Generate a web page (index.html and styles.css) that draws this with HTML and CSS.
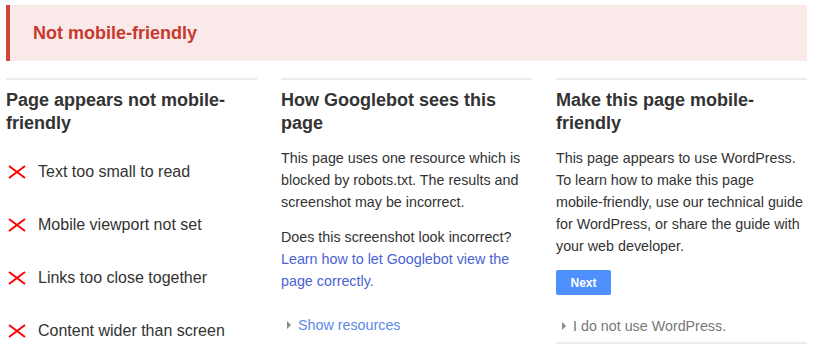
FILE: index.html
```html
<!DOCTYPE html>
<html lang="en">
<head>
    <meta charset="utf-8" />
    <title>Mobile-Friendly Test</title>
    <link rel="stylesheet" href="styles.css">
</head>
<body>
    <div class="page">
        <div class="banner">Not mobile-friendly</div>

        <div class="columns">
            <div class="column">
                <h2>Page appears not mobile-friendly</h2>
                <ul class="issues">
                    <li><svg class="cross" width="18" height="14" viewBox="0 0 18 14"><path d="M1 1L17 13M17 1L1 13" stroke="#f00" stroke-width="2" fill="none"/></svg>Text too small to read</li>
                    <li><svg class="cross" width="18" height="14" viewBox="0 0 18 14"><path d="M1 1L17 13M17 1L1 13" stroke="#f00" stroke-width="2" fill="none"/></svg>Mobile viewport not set</li>
                    <li><svg class="cross" width="18" height="14" viewBox="0 0 18 14"><path d="M1 1L17 13M17 1L1 13" stroke="#f00" stroke-width="2" fill="none"/></svg>Links too close together</li>
                    <li><svg class="cross" width="18" height="14" viewBox="0 0 18 14"><path d="M1 1L17 13M17 1L1 13" stroke="#f00" stroke-width="2" fill="none"/></svg>Content wider than screen</li>
                </ul>
            </div>

            <div class="column">
                <h2>How Googlebot sees this page</h2>
                <p>This page uses one resource which is blocked by robots.txt. The results and screenshot may be incorrect.</p>
                <p>Does this screenshot look incorrect? <a href="#" class="link">Learn how to let Googlebot view the page correctly.</a></p>
                <div class="toggle toggle-blue"><span class="arrow"></span>Show resources</div>
            </div>

            <div class="column column-last">
                <h2>Make this page mobile-friendly</h2>
                <p>This page appears to use WordPress. To learn how to make this page mobile&#8209;friendly, use our technical guide for WordPress, or share the guide with your web developer.</p>
                <button class="next-button">Next</button>
                <div class="toggle toggle-grey"><span class="arrow"></span>I do not use WordPress.</div>
            </div>
        </div>
    </div>
</body>
</html>
```

FILE: styles.css
```css
body {
    margin: 0;
    font-family: "Liberation Sans", Arial, sans-serif;
    color: #333;
    background: #fff;
}

.page {
    padding: 5px 7px 0 6px;
}

.banner {
    background-color: #f9eae9;
    border-left: 4px solid #d2453b;
    color: #c9392f;
    font-size: 18px;
    font-weight: bold;
    height: 56px;
    line-height: 56px;
    padding-left: 23px;
}

.columns {
    display: grid;
    grid-template-columns: 1fr 1fr 1fr;
    column-gap: 24px;
    margin-top: 17px;
}

.column {
    border-top: 2px solid #ebebeb;
}

.column-last {
    border-bottom: 2px solid #ebebeb;
    align-self: start;
    padding-bottom: 5px;
}

h2 {
    font-size: 18px;
    line-height: 23px;
    margin: 9px 0 0 0;
    color: #333;
}

p {
    font-size: 14.3px;
    line-height: 22px;
    margin: 12px 0 0 0;
}

p + p {
    margin-top: 13px;
}

.link {
    color: #4a63d2;
    text-decoration: none;
}

.issues {
    list-style: none;
    padding: 0;
    margin: 26px 0 0 0;
}

.issues li {
    display: flex;
    align-items: center;
    font-size: 16px;
    line-height: 22px;
    margin-bottom: 31px;
}

.cross {
    margin: 0 12px 0 2px;
}

.toggle {
    font-size: 14.3px;
    line-height: 22px;
    margin-top: 22px;
    display: flex;
    align-items: center;
}

.toggle-blue {
    color: #5b8be4;
}

.toggle-grey {
    color: #777;
    margin-top: 20px;
}

.arrow {
    width: 0;
    height: 0;
    border-top: 4px solid transparent;
    border-bottom: 4px solid transparent;
    border-left: 4px solid #888;
    margin: 0 7px 0 6px;
}

.next-button {
    display: block;
    margin-top: 13px;
    background-color: #4d90fe;
    color: #fff;
    border: none;
    border-radius: 2px;
    font-family: "Liberation Sans", Arial, sans-serif;
    font-size: 12px;
    font-weight: bold;
    width: 55px;
    height: 25px;
    padding: 0;
}
```
